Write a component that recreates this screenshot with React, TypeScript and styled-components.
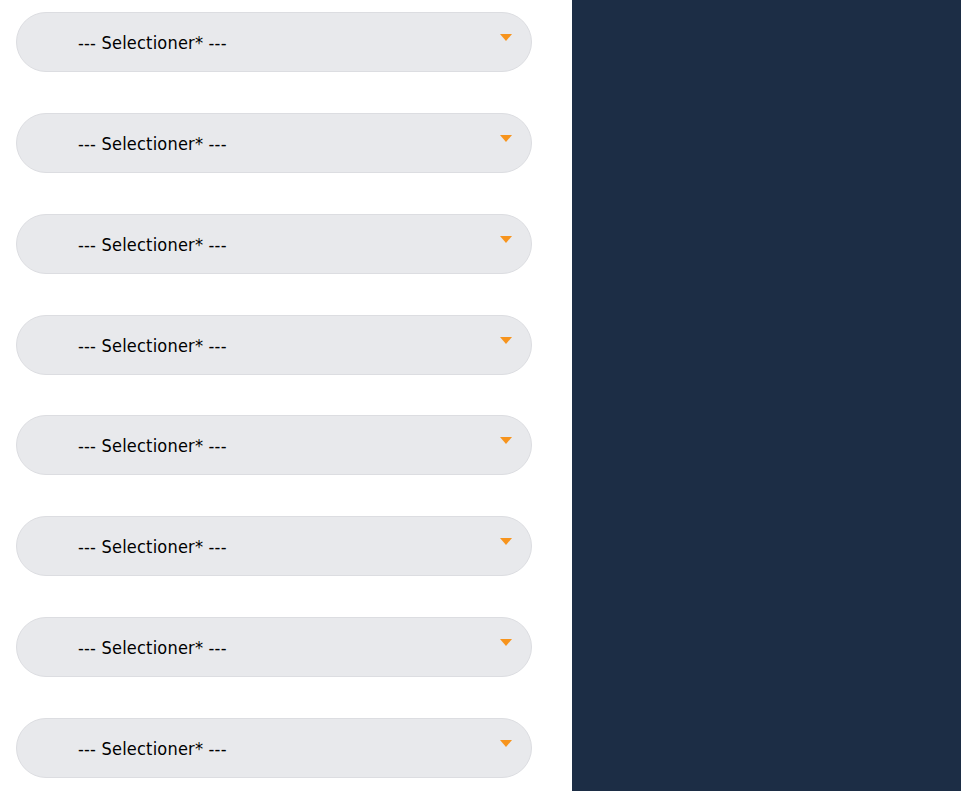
import React from "react";
import styled, { createGlobalStyle } from "styled-components";

const Global = createGlobalStyle`
  html, body { margin: 0; padding: 0; height: 100%; background: #ffffff; }
  #root { height: 100%; }
  * { box-sizing: border-box; }
`;

const Page = styled.div`
  display: grid;
  grid-template-columns: 572px 1fr;
  height: 100vh;
  overflow: hidden;
`;

const FormColumn = styled.div`
  display: flex;
  flex-direction: column;
  gap: 40.857px;
  padding: 12px 40px 0 16px;
  background: #ffffff;
`;

const SideBar = styled.div`
  background: #1c2d45;
`;

const SelectBox = styled.div`
  position: relative;
  display: flex;
  align-items: center;
  height: 60px;
  width: 516px;
  padding-left: 61px;
  background: #e8e9ec;
  border: 1px solid #dcdde1;
  border-radius: 30px;
  font-family: "DejaVu Sans Condensed", "DejaVu Sans", Verdana, sans-serif;
  font-stretch: condensed;
  font-size: 18px;
  color: #000000;
  cursor: pointer;
`;

const Label = styled.span`
  white-space: nowrap;
  letter-spacing: 0.2px;
  padding-top: 1px;
`;

const Arrow = styled.span`
  position: absolute;
  top: 21px;
  right: 19px;
  width: 0;
  height: 0;
  border-left: 6.5px solid transparent;
  border-right: 6.5px solid transparent;
  border-top: 7px solid #f7941d;
`;

const items = Array.from({ length: 8 }, (_, i) => i);

export default function App() {
  return (
    <>
      <Global />
      <Page>
        <FormColumn>
          {items.map((i) => (
            <SelectBox key={i}>
              <Label>--- Selectioner* ---</Label>
              <Arrow />
            </SelectBox>
          ))}
        </FormColumn>
        <SideBar />
      </Page>
    </>
  );
}
